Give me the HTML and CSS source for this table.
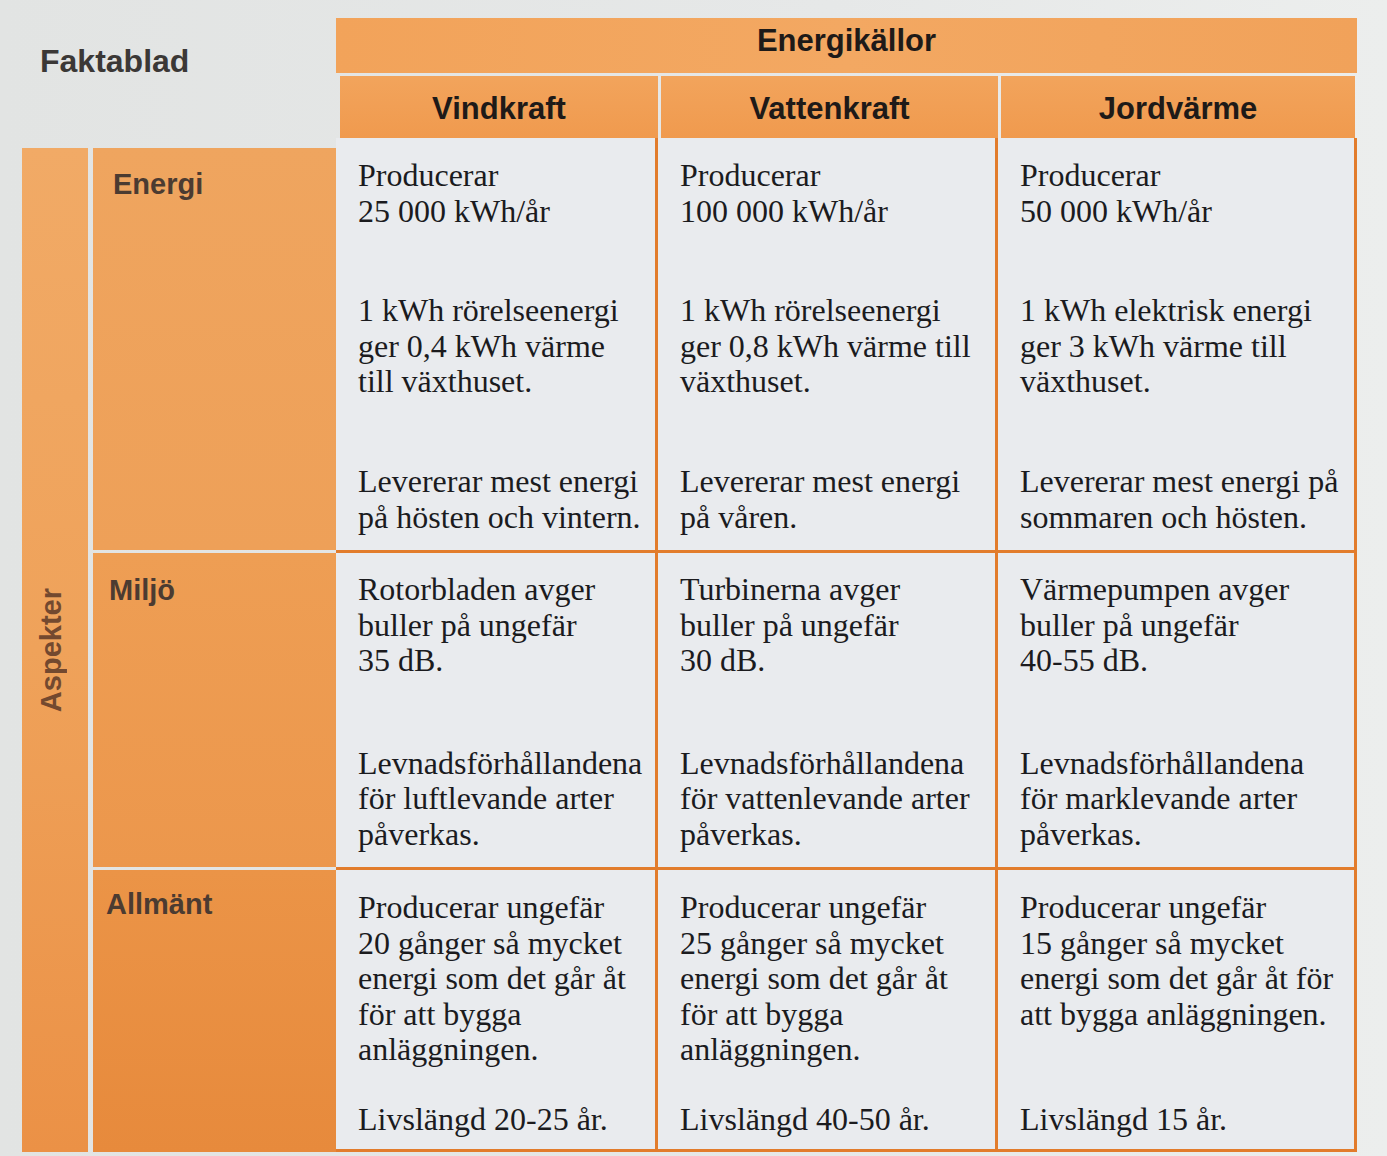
FILE: index.html
```html
<!DOCTYPE html>
<html lang="sv">
<head>
<meta charset="utf-8">
<title>Faktablad – Energikällor</title>
<link rel="stylesheet" href="styles.css">
</head>
<body>
<div class="sheet">
  <div class="title">Faktablad</div>
  <div class="head-main">Energikällor</div>
  <div class="head-sub c1">Vindkraft</div>
  <div class="head-sub c2">Vattenkraft</div>
  <div class="head-sub c3">Jordvärme</div>

  <div class="aspects"><span>Aspekter</span></div>

  <div class="label r1">Energi</div>
  <div class="cell r1 c1">
    <p>Producerar<br>25 000 kWh/år</p>
    <p>1 kWh rörelseenergi<br>ger 0,4 kWh värme<br>till växthuset.</p>
    <p>Levererar mest energi<br>på hösten och vintern.</p>
  </div>
  <div class="cell r1 c2">
    <p>Producerar<br>100 000 kWh/år</p>
    <p>1 kWh rörelseenergi<br>ger 0,8 kWh värme till<br>växthuset.</p>
    <p>Levererar mest energi<br>på våren.</p>
  </div>
  <div class="cell r1 c3">
    <p>Producerar<br>50 000 kWh/år</p>
    <p>1 kWh elektrisk energi<br>ger 3 kWh värme till<br>växthuset.</p>
    <p>Levererar mest energi på<br>sommaren och hösten.</p>
  </div>

  <div class="label r2">Miljö</div>
  <div class="cell r2 c1">
    <p>Rotorbladen avger<br>buller på ungefär<br>35 dB.</p>
    <p>Levnadsförhållandena<br>för luftlevande arter<br>påverkas.</p>
  </div>
  <div class="cell r2 c2">
    <p>Turbinerna avger<br>buller på ungefär<br>30 dB.</p>
    <p>Levnadsförhållandena<br>för vattenlevande arter<br>påverkas.</p>
  </div>
  <div class="cell r2 c3">
    <p>Värmepumpen avger<br>buller på ungefär<br>40-55 dB.</p>
    <p>Levnadsförhållandena<br>för marklevande arter<br>påverkas.</p>
  </div>

  <div class="label r3">Allmänt</div>
  <div class="cell r3 c1">
    <p>Producerar ungefär<br>20 gånger så mycket<br>energi som det går åt<br>för att bygga<br>anläggningen.</p>
    <p>Livslängd 20-25 år.</p>
  </div>
  <div class="cell r3 c2">
    <p>Producerar ungefär<br>25 gånger så mycket<br>energi som det går åt<br>för att bygga<br>anläggningen.</p>
    <p>Livslängd 40-50 år.</p>
  </div>
  <div class="cell r3 c3">
    <p>Producerar ungefär<br>15 gånger så mycket<br>energi som det går åt för<br>att bygga anläggningen.</p>
    <p>Livslängd 15 år.</p>
  </div>
</div>
</body>
</html>
```
FILE: styles.css
```css
html, body {
  margin: 0;
  padding: 0;
}
body {
  background: linear-gradient(90deg, #e2e4e3 0%, #e6e8e8 60%, #eceeed 100%);
  width: 1387px;
  height: 1156px;
  overflow: hidden;
}
.sheet {
  display: grid;
  grid-template-columns: 71px 243px 322px 340px 359px;
  grid-template-rows: 58px 62px 415px 317px 282px;
  margin: 18px 0 0 22px;
  font-family: "Liberation Serif", "Times New Roman", serif;
}

/* headers */
.title {
  grid-column: 1 / 3;
  grid-row: 1 / 3;
  padding: 25px 0 0 18px;
  font-family: "Liberation Sans", Arial, sans-serif;
  font-weight: bold;
  font-size: 32px;
  color: #3b3836;
}
.head-main {
  grid-column: 3 / 6;
  grid-row: 1;
  margin-bottom: 3px;
  background: linear-gradient(90deg, #f2a35a 0%, #f3a862 50%, #f1a25a 100%);
  font-family: "Liberation Sans", Arial, sans-serif;
  font-weight: bold;
  font-size: 31px;
  color: #1e1a18;
  text-align: center;
  line-height: 46px;
}
.head-sub {
  grid-row: 2;
  background: linear-gradient(180deg, #f2a45c 0%, #f09a4e 100%);
  font-family: "Liberation Sans", Arial, sans-serif;
  font-weight: bold;
  font-size: 31px;
  color: #1e1a18;
  display: flex;
  align-items: center;
  justify-content: center;
  padding-top: 4px;
}
.head-sub.c1 { grid-column: 3; margin-left: 4px; }
.head-sub.c2 { grid-column: 4; margin-left: 3px; }
.head-sub.c3 { grid-column: 5; margin-left: 3px; margin-right: 2px; }

/* aspects band */
.aspects {
  grid-column: 1;
  grid-row: 3 / 6;
  margin: 10px 5px 0 0;
  background: linear-gradient(180deg, #f1aa66 0%, #efa25a 50%, #eb9146 100%);
  display: flex;
  align-items: center;
  justify-content: center;
}
.aspects span {
  writing-mode: vertical-rl;
  transform: rotate(180deg);
  font-family: "Liberation Sans", Arial, sans-serif;
  font-weight: bold;
  font-size: 29px;
  color: #73492f;
  margin: 0 8px 0 0;
}

/* aspect labels */
.label {
  grid-column: 2;
  font-family: "Liberation Sans", Arial, sans-serif;
  font-weight: bold;
  font-size: 29px;
  line-height: 34px;
  color: #4b3b31;
  padding: 19px 0 0 20px;
}
.label.r1 {
  grid-row: 3;
  margin: 10px 0 3px 0;
  background: linear-gradient(180deg, #efa55f 0%, #eea058 100%);
}
.label.r2 {
  grid-row: 4;
  margin-bottom: 3px;
  padding-top: 20px;
  padding-left: 16px;
  background: linear-gradient(180deg, #ee9e54 0%, #ec974c 100%);
}
.label.r3 {
  grid-row: 5;
  padding-top: 17px;
  padding-left: 13px;
  background: linear-gradient(180deg, #eb9447 0%, #e78a3c 100%);
}

/* data cells */
.cell {
  background: #e9ebee;
  border-right: 3px solid #e27c2c;
  border-bottom: 3px solid #e27c2c;
  display: flex;
  flex-direction: column;
  justify-content: space-between;
  padding: 19px 6px 15px 22px;
  font-size: 32px;
  line-height: 35.5px;
  color: #1b1b1e;
}
.cell p {
  margin: 0;
  white-space: nowrap;
}
.cell.c1 { grid-column: 3; }
.cell.c2 { grid-column: 4; }
.cell.c3 { grid-column: 5; }
.cell.r1 { grid-row: 3; padding-top: 20px; }
.cell.r2 { grid-row: 4; }
.cell.r3 { grid-row: 5; padding-top: 20px; padding-bottom: 12px; }
```
